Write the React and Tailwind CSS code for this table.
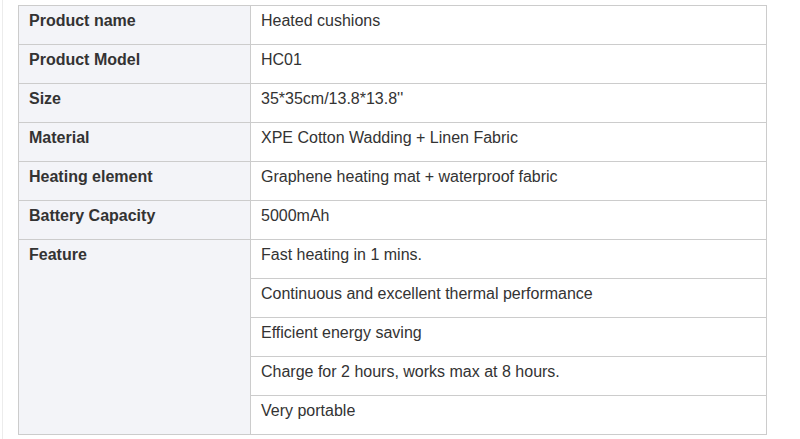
export default function App() {
  const rows = [
    ["Product name", "Heated cushions"],
    ["Product Model", "HC01"],
    ["Size", "35*35cm/13.8*13.8''"],
    ["Material", "XPE Cotton Wadding + Linen Fabric"],
    ["Heating element", "Graphene heating mat + waterproof fabric"],
    ["Battery Capacity", "5000mAh"],
  ];
  const features = [
    "Fast heating in 1 mins.",
    "Continuous and excellent thermal performance",
    "Efficient energy saving",
    "Charge for 2 hours, works max at 8 hours.",
    "Very portable",
  ];
  const th = "border border-[#cccccc] bg-[#f3f4f8] font-bold text-left align-top px-[10px] pt-[6px] h-[39px] w-[232px]";
  const td = "border border-[#cccccc] bg-white font-normal text-left align-top px-[10px] pt-[6px] h-[39px]";
  return (
    <div className="w-[800px] h-[439px] bg-white relative overflow-hidden" style={{ fontFamily: '"Liberation Sans", Arial, sans-serif' }}>
      <div className="absolute left-[2px] top-0 bottom-0 w-px bg-[#ececec]" />
      <div className="pl-[18px] pt-[5px]">
        <table className="border-collapse w-[749px] text-[16px] leading-[18px] text-[#333333]">
          <tbody>
            {rows.map(([k, v]) => (
              <tr key={k}>
                <th className={th}>{k}</th>
                <td className={td}>{v}</td>
              </tr>
            ))}
            {features.map((f, i) => (
              <tr key={f}>
                {i === 0 && (
                  <th rowSpan={5} className={th}>Feature</th>
                )}
                <td className={td}>{f}</td>
              </tr>
            ))}
          </tbody>
        </table>
      </div>
    </div>
  );
}
